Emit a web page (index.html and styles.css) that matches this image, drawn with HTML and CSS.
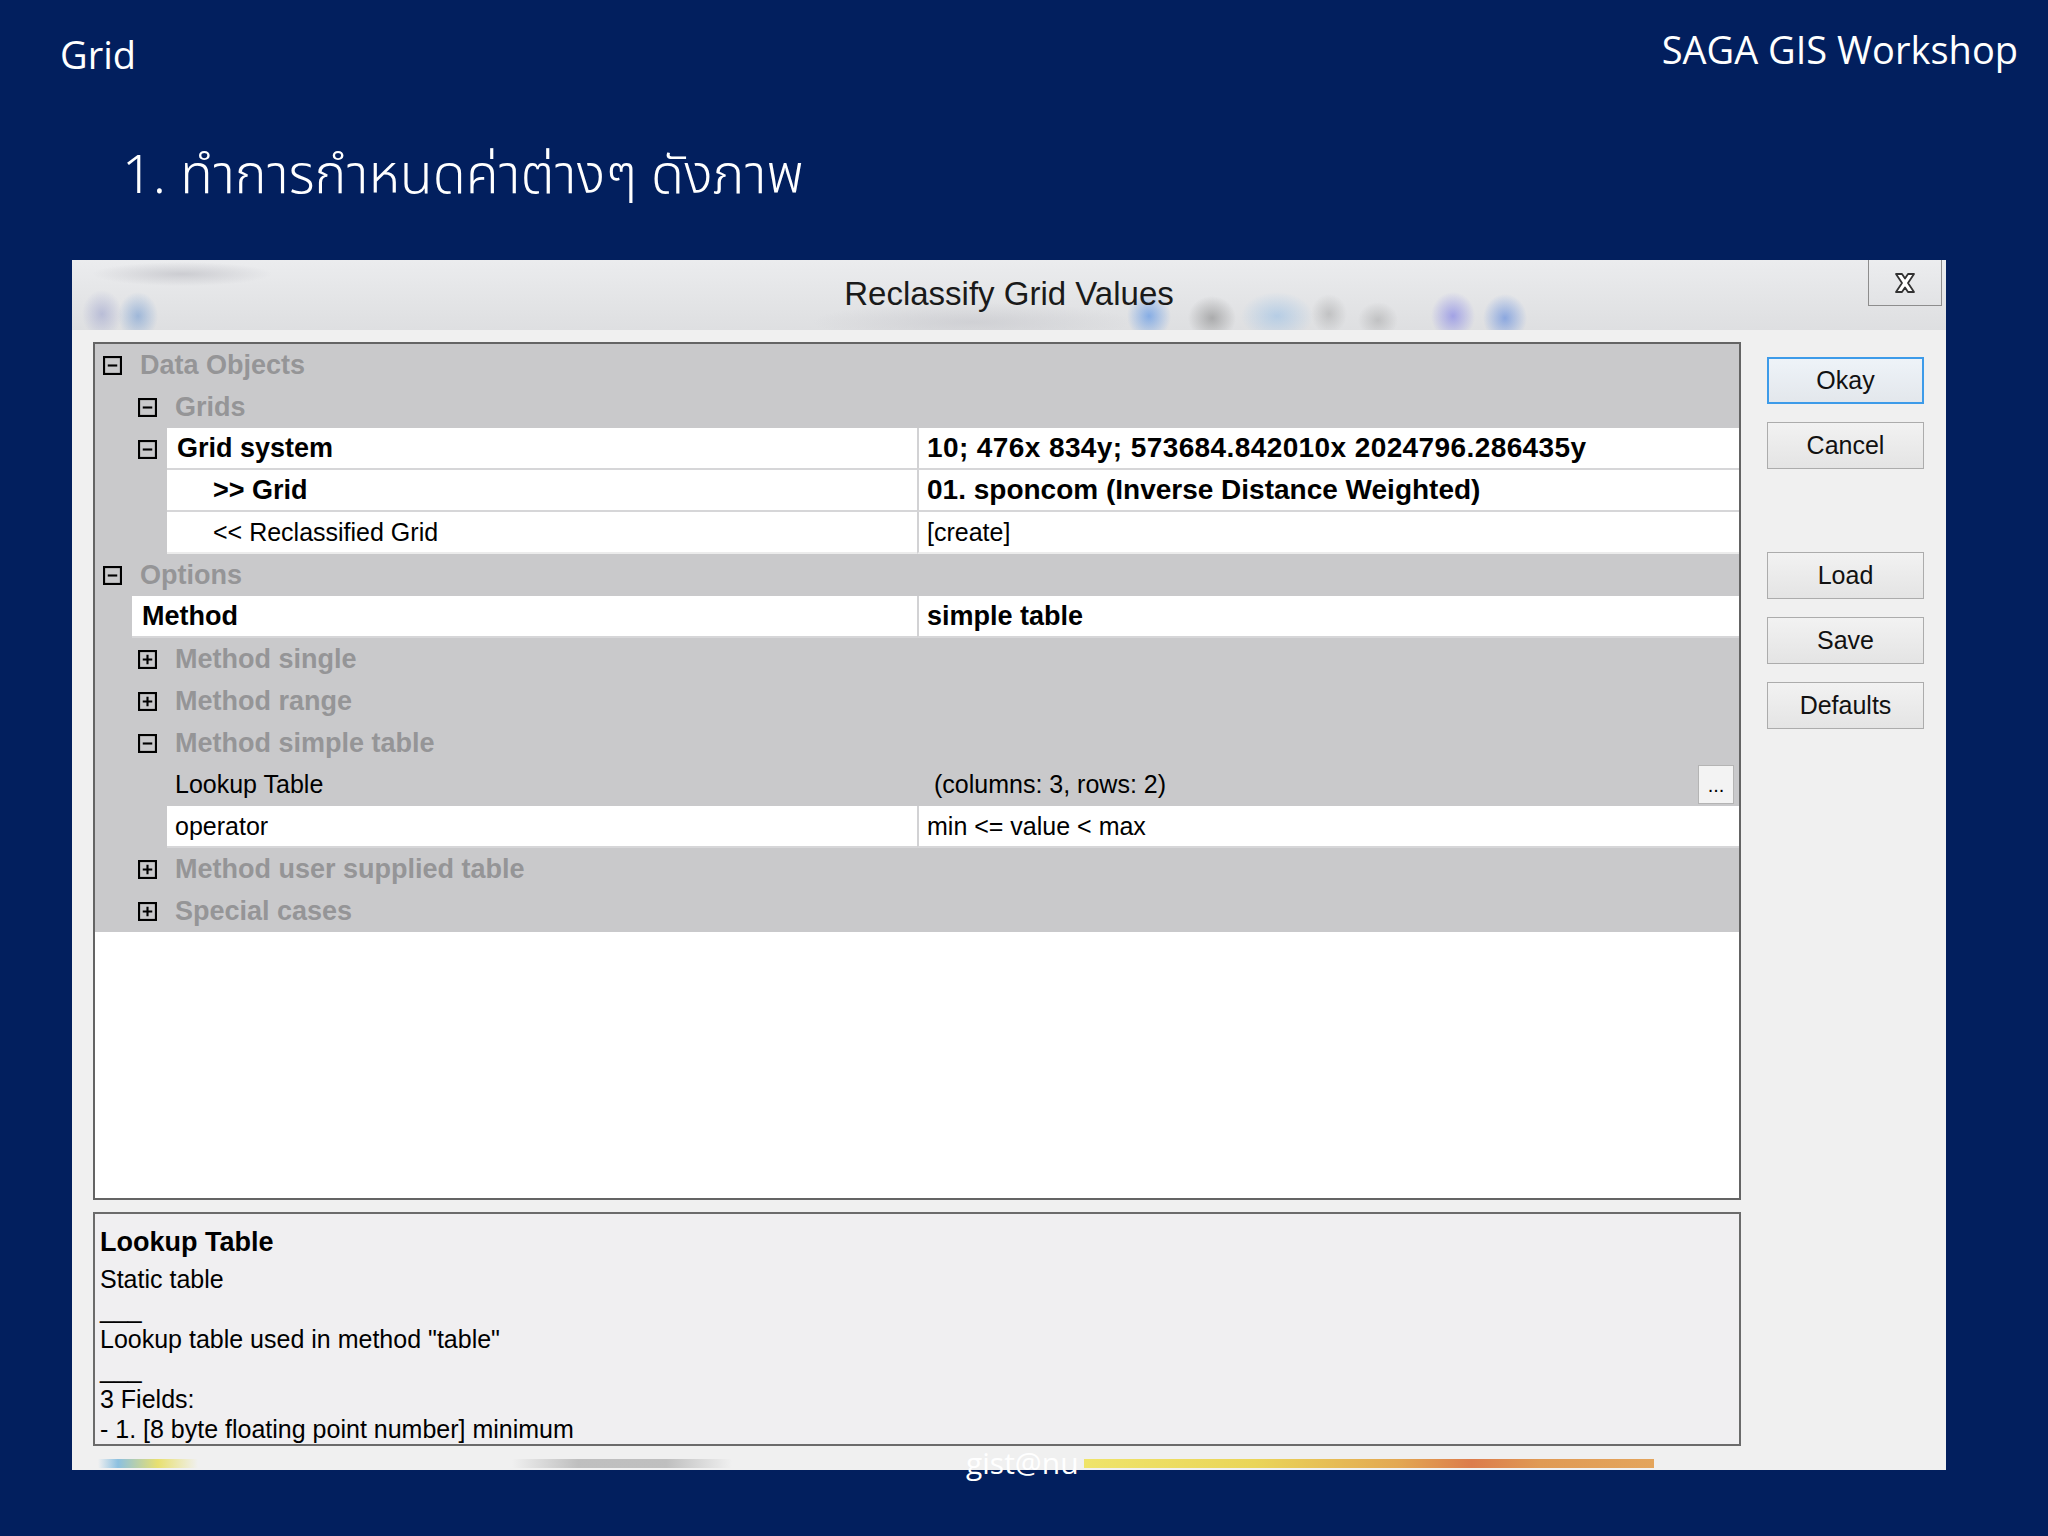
FILE: index.html
```html
<!DOCTYPE html>
<html lang="th">
<head>
<meta charset="utf-8">
<title>Grid - SAGA GIS Workshop</title>
<link rel="stylesheet" href="styles.css">
</head>
<body>
<div class="slide">
  <div class="top">
    <header class="slide-header">
      <div class="deck-title">Grid</div>
      <div class="deck-brand">SAGA GIS Workshop</div>
    </header>
    <h1 class="step">1. ทำการกำหนดค่าต่างๆ ดังภาพ</h1>
  </div>

  <div class="dialog">
    <div class="titlebar">
      <span></span>
      <div class="title">Reclassify Grid Values</div>
      <div class="close-wrap">
        <div class="close">
          <svg width="22" height="22" viewBox="0 0 22 22"><path d="M2 2h6l3 4.5L14 2h6l-6 9 6 9h-6l-3-4.5L8 20H2l6-9z" fill="#fff" stroke="#333" stroke-width="1.8" stroke-linejoin="round"/></svg>
        </div>
      </div>
    </div>

    <div class="client">
      <div class="main">
        <div class="tree">
          <div class="row cat l0">
            <svg class="exp" viewBox="0 0 18 18"><rect x="1" y="1" width="16" height="16"/><path d="M4.5 9h9"/></svg>
            <span class="cat-label">Data Objects</span>
          </div>
          <div class="row cat l1">
            <svg class="exp" viewBox="0 0 18 18"><rect x="1" y="1" width="16" height="16"/><path d="M4.5 9h9"/></svg>
            <span class="cat-label">Grids</span>
          </div>
          <div class="row prop">
            <div class="gutter g72"><svg class="exp" viewBox="0 0 18 18"><rect x="1" y="1" width="16" height="16"/><path d="M4.5 9h9"/></svg></div>
            <div class="name w72 bold pad10">Grid system</div>
            <div class="value bold wide">10; 476x 834y; 573684.842010x 2024796.286435y</div>
          </div>
          <div class="row prop">
            <div class="gutter g72"></div>
            <div class="name w72 bold pad46">&gt;&gt; Grid</div>
            <div class="value bold big">01. sponcom (Inverse Distance Weighted)</div>
          </div>
          <div class="row prop">
            <div class="gutter g72"></div>
            <div class="name w72 pad46 dotted">&lt;&lt; Reclassified Grid</div>
            <div class="value dotted">[create]</div>
          </div>
          <div class="row cat l0">
            <svg class="exp" viewBox="0 0 18 18"><rect x="1" y="1" width="16" height="16"/><path d="M4.5 9h9"/></svg>
            <span class="cat-label">Options</span>
          </div>
          <div class="row prop">
            <div class="gutter g37"></div>
            <div class="name w37 bold pad10">Method</div>
            <div class="value bold">simple table</div>
          </div>
          <div class="row cat l1">
            <svg class="exp" viewBox="0 0 18 18"><rect x="1" y="1" width="16" height="16"/><path d="M4.5 9h9M9 4.5v9"/></svg>
            <span class="cat-label">Method single</span>
          </div>
          <div class="row cat l1">
            <svg class="exp" viewBox="0 0 18 18"><rect x="1" y="1" width="16" height="16"/><path d="M4.5 9h9M9 4.5v9"/></svg>
            <span class="cat-label">Method range</span>
          </div>
          <div class="row cat l1">
            <svg class="exp" viewBox="0 0 18 18"><rect x="1" y="1" width="16" height="16"/><path d="M4.5 9h9"/></svg>
            <span class="cat-label">Method simple table</span>
          </div>
          <div class="row prop selected">
            <div class="gutter g72"></div>
            <div class="name w72 pad8">Lookup Table</div>
            <div class="value pad17">
              <span>(columns: 3, rows: 2)</span>
              <span class="more">...</span>
            </div>
          </div>
          <div class="row prop">
            <div class="gutter g72"></div>
            <div class="name w72 pad8">operator</div>
            <div class="value">min &lt;= value &lt; max</div>
          </div>
          <div class="row cat l1">
            <svg class="exp" viewBox="0 0 18 18"><rect x="1" y="1" width="16" height="16"/><path d="M4.5 9h9M9 4.5v9"/></svg>
            <span class="cat-label">Method user supplied table</span>
          </div>
          <div class="row cat l1">
            <svg class="exp" viewBox="0 0 18 18"><rect x="1" y="1" width="16" height="16"/><path d="M4.5 9h9M9 4.5v9"/></svg>
            <span class="cat-label">Special cases</span>
          </div>
        </div>

        <div class="desc">
          <div class="desc-title">Lookup Table</div>
          <div class="desc-line">Static table</div>
          <div class="desc-line">___</div>
          <div class="desc-line">Lookup table used in method "table"</div>
          <div class="desc-line">___</div>
          <div class="desc-line">3 Fields:</div>
          <div class="desc-line">- 1. [8 byte floating point number] minimum</div>
        </div>
      </div>

      <div class="buttons">
        <div class="btn default">Okay</div>
        <div class="btn">Cancel</div>
        <div class="btn spaced">Load</div>
        <div class="btn">Save</div>
        <div class="btn">Defaults</div>
      </div>
    </div>
    <div class="strip"></div>
  </div>

  <div class="footer">gist@nu</div>
</div>
</body>
</html>
```

FILE: styles.css
```css
* { box-sizing: border-box; }

html, body {
  margin: 0;
  padding: 0;
  background: #021f5e;
}

.slide {
  position: relative;
  width: 2048px;
  height: 1536px;
  background: #021f5e;
  color: #fff;
  overflow: hidden;
}

.top {
  height: 260px;
}

.slide-header {
  display: flex;
  justify-content: space-between;
  align-items: flex-start;
  padding: 23px 30px 0 60px;
  font-family: "Open Sans", "Noto Sans", sans-serif;
  font-size: 38px;
  line-height: 52px;
}

.deck-title { margin-top: 5px; }

.step {
  margin: 67px 0 0 0;
  padding-left: 122px;
  font-family: "Noto Sans Thai", "Noto Sans", "DejaVu Sans", sans-serif;
  font-weight: 300;
  font-size: 54px;
  line-height: 60px;
  color: #fff;
  white-space: nowrap;
}

/* ---------- dialog ---------- */
.dialog {
  width: 1874px;
  margin-left: 72px;
  font-family: "Liberation Sans", Arial, sans-serif;
  color: #000;
  background: #f0f0f0;
}

.titlebar {
  height: 70px;
  display: grid;
  grid-template-columns: 1fr auto 1fr;
  background:
    radial-gradient(ellipse 90px 12px at 110px 14px, rgba(150,150,160,0.35), rgba(150,150,160,0) 100%),
    radial-gradient(ellipse 20px 24px at 30px 54px, rgba(110,120,190,0.35), rgba(110,120,190,0) 100%),
    radial-gradient(ellipse 20px 24px at 66px 56px, rgba(60,120,200,0.4), rgba(60,120,200,0) 100%),
    radial-gradient(ellipse 22px 24px at 1077px 56px, rgba(60,130,230,0.55), rgba(60,130,230,0) 100%),
    radial-gradient(ellipse 24px 22px at 1140px 58px, rgba(90,90,90,0.4), rgba(90,90,90,0) 100%),
    radial-gradient(ellipse 36px 24px at 1205px 56px, rgba(130,180,230,0.45), rgba(130,180,230,0) 100%),
    radial-gradient(ellipse 18px 20px at 1257px 54px, rgba(120,120,120,0.3), rgba(120,120,120,0) 100%),
    radial-gradient(ellipse 20px 18px at 1306px 60px, rgba(120,120,120,0.3), rgba(120,120,120,0) 100%),
    radial-gradient(ellipse 22px 24px at 1381px 56px, rgba(110,110,230,0.55), rgba(110,110,230,0) 100%),
    radial-gradient(ellipse 22px 24px at 1433px 58px, rgba(70,120,220,0.55), rgba(70,120,220,0) 100%),
    radial-gradient(ellipse 160px 20px at 900px 62px, rgba(160,160,170,0.25), rgba(160,160,170,0) 100%),
    linear-gradient(#ebecee, #dedfe1);
}

.title {
  grid-column: 2;
  padding-top: 16px;
  font-size: 33px;
  line-height: 36px;
  color: #1a1a1a;
  white-space: nowrap;
}

.close-wrap {
  grid-column: 3;
  display: flex;
  justify-content: flex-end;
  padding-right: 4px;
}

.close {
  width: 74px;
  height: 46px;
  display: flex;
  align-items: center;
  justify-content: center;
  border: 1px solid #8d8d8d;
  border-top: none;
  background: linear-gradient(#ecedef, #e2e3e5);
}

.client {
  display: grid;
  grid-template-columns: 1648px 157px;
  column-gap: 26px;
  padding: 12px 22px 0 21px;
  background: #f0f0f0;
}

.main {
  display: flex;
  flex-direction: column;
  gap: 12px;
}

/* ---------- property tree ---------- */
.tree {
  height: 858px;
  border: 2px solid #646464;
  background: #fff;
  overflow: hidden;
}

.row {
  display: flex;
  align-items: center;
  height: 42px;
  background: #c9c9cb;
  font-size: 25px;
  white-space: nowrap;
}

.exp {
  width: 19px;
  height: 19px;
  flex: none;
  fill: none;
  stroke: #000;
  stroke-width: 2;
}

.cat.l0 { padding-left: 8px; }
.cat.l1 { padding-left: 43px; }
.cat .exp { margin-right: 18px; }

.cat-label {
  font-weight: bold;
  font-size: 27px;
  color: #959597;
}

.prop {
  align-items: stretch;
}

.gutter {
  flex: none;
  display: flex;
  align-items: center;
}
.g72 { width: 72px; padding-left: 43px; }
.g37 { width: 37px; }

.name,
.value {
  display: flex;
  align-items: center;
  background: #fff;
  border-bottom: 2px solid #d6d6d8;
  overflow: hidden;
}

.name { flex: none; }
.w72 { width: 750px; }
.w37 { width: 785px; }

.value {
  flex: 1;
  border-left: 2px solid #d2d2d4;
  padding-left: 8px;
}

.bold {
  font-weight: bold;
  font-size: 27px;
}

.bold.wide {
  font-size: 28px;
  letter-spacing: 0.4px;
}

.bold.big {
  font-size: 28px;
}

.pad8 { padding-left: 8px; }
.pad10 { padding-left: 10px; }
.pad46 { padding-left: 46px; }
.pad17 { padding-left: 15px; }

.dotted { border-bottom: 2px solid #ececec; }

.selected .name,
.selected .value {
  background: #c9c9cb;
  border-bottom-color: #c9c9cb;
}

.selected .value {
  justify-content: space-between;
  padding-right: 5px;
  border-left-color: #c9c9cb;
}

.more {
  width: 36px;
  height: 39px;
  display: flex;
  align-items: flex-end;
  justify-content: center;
  padding-bottom: 8px;
  font-size: 20px;
  line-height: 1;
  background: #f3f3f3;
  border: 1px solid #b4b4b4;
}

/* ---------- description ---------- */
.desc {
  height: 234px;
  border: 2px solid #6b6b6b;
  background: #f0eff1;
  padding: 13px 4px 0 5px;
  overflow: hidden;
}

.desc-title {
  font-weight: bold;
  font-size: 27px;
  line-height: 30px;
  margin-bottom: 7px;
}

.desc-line {
  font-size: 25px;
  line-height: 30px;
  white-space: nowrap;
}

/* ---------- buttons ---------- */
.buttons {
  display: flex;
  flex-direction: column;
  gap: 18px;
  padding-top: 15px;
}

.btn {
  height: 47px;
  display: flex;
  align-items: center;
  justify-content: center;
  font-size: 25px;
  color: #111;
  border: 1px solid #acacac;
  background: linear-gradient(#f2f2f2, #e4e4e4);
}

.btn.default {
  border: 2px solid #3d9be9;
  background: linear-gradient(#eef3f8, #e3e7ec);
}

.btn.spaced { margin-top: 65px; }

/* ---------- bottom strip ---------- */
.strip {
  height: 24px;
  background:
    linear-gradient(to right, rgba(120,170,220,0), #8cc0e0 20%, #e8e070 60%, rgba(232,224,112,0)) 26px 13px / 100px 9px no-repeat,
    linear-gradient(to right, rgba(170,170,170,0), rgba(170,170,170,0.7) 30%, rgba(170,170,170,0.7) 70%, rgba(170,170,170,0)) 440px 13px / 220px 9px no-repeat,
    linear-gradient(to right, #efe46a, #ead558 30%, #e3a852 55%, #dc7c4c 68%, #e09a54 80%, #e4a55c 100%) 1012px 13px / 570px 9px no-repeat,
    #f0f0f0;
}

.footer {
  position: absolute;
  left: 966px;
  top: 1443px;
  font-family: "Open Sans", "Noto Sans", sans-serif;
  font-size: 30px;
  line-height: 40px;
  color: #fff;
}
```
